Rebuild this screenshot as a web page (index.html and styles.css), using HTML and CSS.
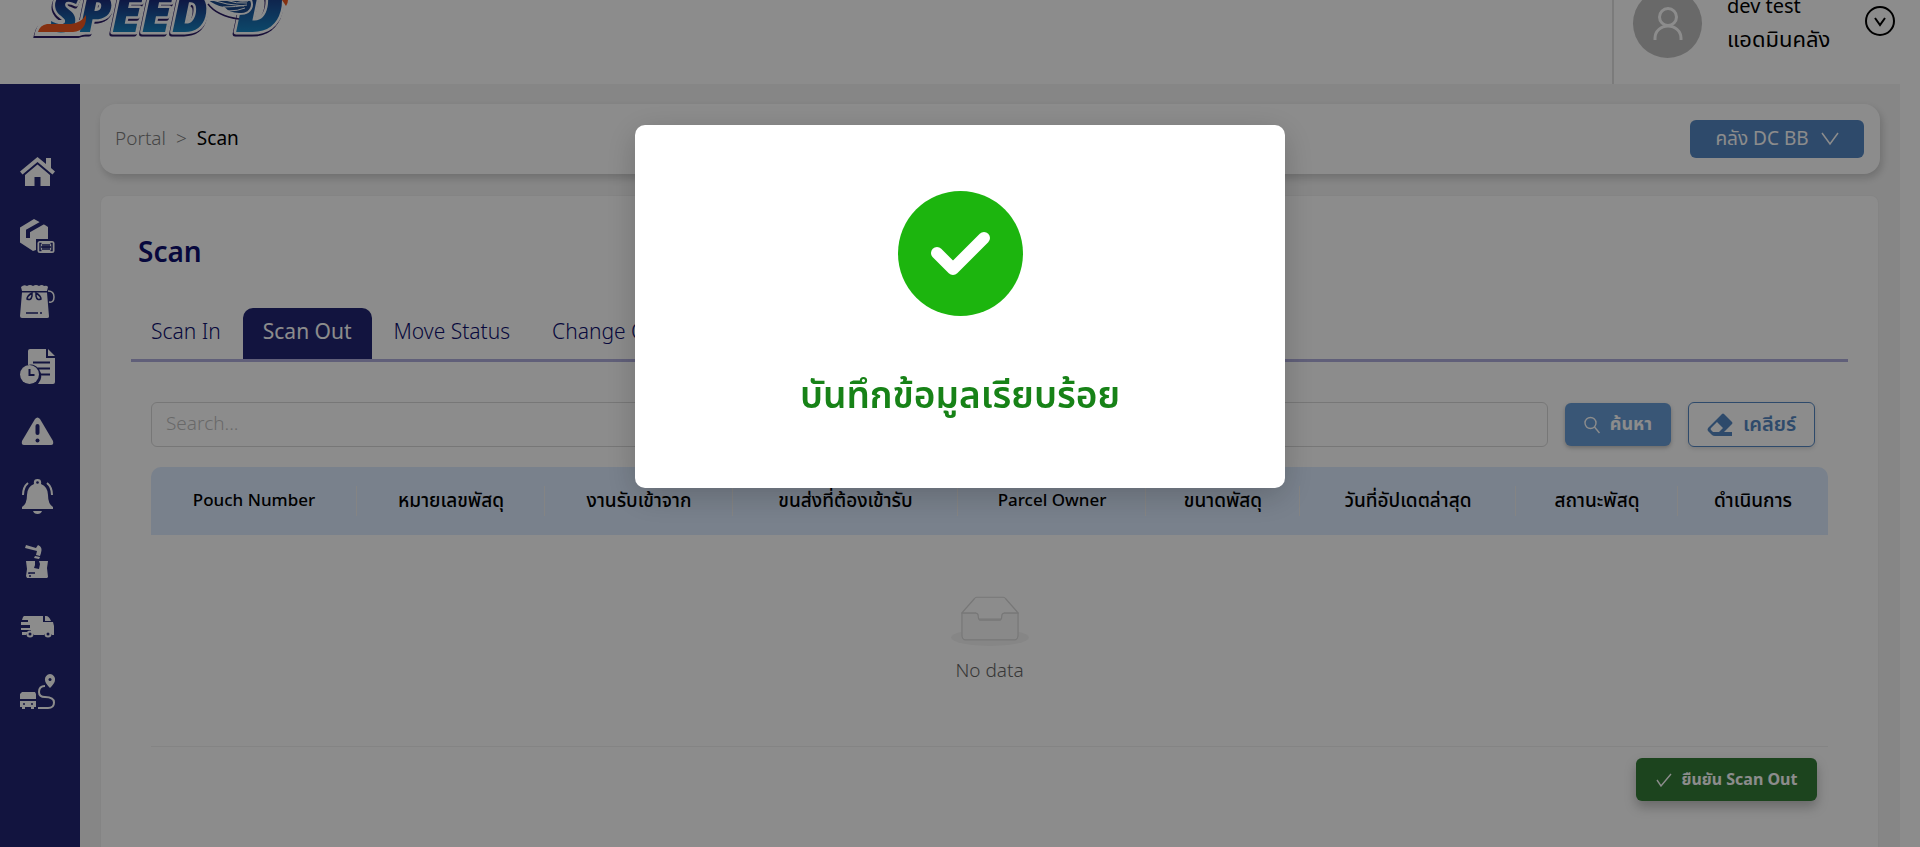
FILE: index.html
```html
<!DOCTYPE html>
<html lang="th">
<head>
<meta charset="utf-8">
<title>Speed-D Scan</title>
<link rel="stylesheet" href="styles.css">
</head>
<body>
<div class="page">
  <header class="header">
    <svg class="logo" width="270" height="54" viewBox="0 0 270 54" role="img" aria-label="Speed-D">
      <defs>
        <linearGradient id="ink" x1="0" y1="0" x2="0" y2="1">
          <stop offset="0.3" stop-color="#1d2476"/><stop offset="0.8" stop-color="#1787c4"/>
        </linearGradient>
      </defs>
      <g class="logo-rim">
        <path d="M14 33q2-9 9-10h38v8l-6 2z" fill="#fff" stroke="#fff" stroke-width="6"/>
        <g class="logo-text" fill="url(#ink)"><text x="26" y="32">SPEED</text><text class="logo-d" x="211" y="32">D</text></g>
      </g>
      <path d="M14 32q2-7 9-8h24q10-1 15-9 1 16-13 17z" fill="#f2581e"/>
      <path d="M258 0h6q0 3-2 6z" fill="#f2581e"/>
      <path d="M183 0q6 6 17 8 5 6 15 6 6 0 9-2 6-5 3-12z" fill="#1b4a8c" stroke="#fff" stroke-width="2"/>
      <path d="M188 0q14 5 32 6M199 7q13 0 24-2M204 11q10 0 17-3M201 0q12 4 22 3M211 0q6 2 13 1" fill="none" stroke="#fff" stroke-width="1"/>
      <path d="M184 4q9 12 31 15" fill="none" stroke="#2b1c66" stroke-width="1.500"/>
    </svg>
    <div class="user">
      <span class="avatar">
        <svg width="32" height="34" viewBox="0 0 32 34" fill="none" stroke="#fff" stroke-width="3"><circle cx="16" cy="10" r="8.500"/><path d="M3 33v-2a13 12 0 0 1 26 0v2"/></svg>
      </span>
      <div class="user-text"><span>dev test</span><span class="role">แอดมินคลัง</span></div>
      <button class="user-toggle" aria-label="เมนูผู้ใช้">
        <svg width="30" height="30" viewBox="0 0 30 30" fill="none" stroke="#000" stroke-width="2"><circle cx="15" cy="15" r="14"/><path d="M10 12l5 7 5-7"/></svg>
      </button>
    </div>
  </header>
  <div class="body">
    <nav class="sidebar">
      <a href="#" aria-label="หน้าแรก"><svg viewBox="0 0 35 35"><path d="M17.500 3L0 17.500l2.500 3L17.500 8l15 12.500 2.500-3-4-3.500V4h-5v6z"/><path d="M17.500 10.500L5 21v11h9.500v-9h6v9H30V21z"/></svg></a>
      <a href="#" aria-label="พัสดุ"><svg viewBox="0 0 35 35"><path d="M14 0L0 8.500v15L13 32l3-1V20h12V8l-3-2z"/><path d="M23 3.500L8 12v7" fill="none" stroke="#212573" stroke-width="4"/><rect x="16.500" y="21" width="19" height="14" rx="3" fill="#212573"/><rect x="17.500" y="22" width="17" height="12" rx="2.500"/><path class="cut" d="M21.500 24.500H20v7h1.500M30.500 24.500H32v7h-1.500M23 25v6M25 25v6M27 25v6M29 25v6M21 28h10"/></svg></a>
      <a href="#" aria-label="ถุง"><svg viewBox="0 0 35 35"><path d="M1 3q3-3 6-1 3-2 6 0 3-2 6 0 3-2 5 0 3-1 4 1l-1 4H2zM2 8.500h25l2 24q0 1.500-2 1.500H2q-2 0-2-2z"/><path d="M28 7q6 0 6 6t-5 5" fill="none" stroke="#fff" stroke-width="1.500"/><path class="cut" d="M12 9q-5 3-5 6 4 2 5-3zM16 9q5 3 5 6-4 2-5-3zM6 29h12M20 29h2"/></svg></a>
      <a href="#" aria-label="รายงาน"><svg viewBox="0 0 35 35"><path d="M8 2q0-2 2-2h16v9h9v24q0 2-2 2H18q6-7 1-15-5-6-11-4zM28 0l7 7h-7z"/><path class="cut wide" d="M13 13.500h17M18 19.500h12M20 25.500h10"/><circle cx="9.500" cy="25.500" r="9.500"/><path class="cut wide" d="M9.500 20v6h5"/></svg></a>
      <a href="#" aria-label="แจ้งเตือนปัญหา"><svg viewBox="0 0 35 35"><path d="M15 5q2.500-3 5 0l13 22q1 4-2 4H4q-3 0-2-4z"/><path d="M17.500 12v7" stroke="#212573" stroke-width="4" stroke-linecap="round"/><circle cx="17.500" cy="26.500" r="2" fill="#212573"/></svg></a>
      <a href="#" aria-label="การแจ้งเตือน"><svg viewBox="0 0 35 35"><path d="M13 32h9q-1 3-4.500 3T13 32zM14 5q-1-5 3.500-5T21 5q7 3 7 11 0 9 5 12v2H2v-2q5-3 5-12 0-8 7-11z"/><circle cx="17.500" cy="3.500" r="1.300" fill="#212573"/><path d="M3 16q0-8 5-12M32 16q0-8-5-12" fill="none" stroke="#fff" stroke-width="2"/></svg></a>
      <a href="#" aria-label="พัสดุเสียหาย"><svg viewBox="0 0 35 35"><path d="M6 1l10 3 2-3q5 2 3 8l-1 3-4-1 1-4L5 4zM15 12l5 1-1 2-5-1zM6 17h9v4l-1 3 5 1 1-5-1-3h9l-1 7 1 9-1 1H7l-1-2 1-7z"/><path class="cut" d="M9 30v-1h6M9 32h2"/></svg></a>
      <a href="#" aria-label="ขนส่ง"><svg viewBox="0 0 35 35"><path d="M4 7h19v6h10l1 4v9h-2a4.500 4.500 0 0 0-8 0H14a4.500 4.500 0 0 0-8 0H2v-3h9v-2H1v-2h9v-3H1v-3h7v-2H2l1-3zM25 7h1q3 0 5 5h-6z"/><circle cx="10" cy="25" r="3.500"/><circle cx="28" cy="25" r="3.500"/><g fill="#212573"><circle cx="10" cy="25" r="1.500"/><circle cx="28" cy="25" r="1.500"/></g></svg></a>
      <a href="#" aria-label="เส้นทาง"><svg viewBox="0 0 35 35"><path d="M30 0a5.300 5.300 0 0 1 5 6q0 3-5 8-5-5-5-8a5.300 5.300 0 0 1 5-6zM2 18h13l1 2v5H0v-5zM0 27h16v6h-2v2h-3v-2H5v2H2v-2H0z"/><g fill="#212573"><circle cx="30" cy="5.500" r="1.500"/><circle cx="4" cy="30" r="1"/><circle cx="12" cy="30" r="1"/></g><path d="M25 12q-6 0-6 6 0 5 6 5 9 0 9 5.500T28 34H18" fill="none" stroke="#fff" stroke-width="2"/></svg></a>
    </nav>
    <main class="main">
      <div class="crumb-card">
        <div class="crumbs"><a href="#">Portal</a><span>&gt;</span><b>Scan</b></div>
        <button class="btn store">คลัง DC BB <svg width="18" height="14" viewBox="0 0 18 14" fill="none" stroke="#fff" stroke-width="1.500"><path d="M1 1l8 11 8-11"/></svg></button>
      </div>
      <section class="card">
        <h1>Scan</h1>
        <div class="tabs" role="tablist">
          <button role="tab">Scan In</button><button role="tab" class="active" aria-selected="true">Scan Out</button><button role="tab">Move Status</button><button role="tab">Change Owner</button>
        </div>
        <div class="panel">
          <div class="search-row">
            <input type="text" placeholder="Search..." aria-label="Search">
            <button class="btn search"><svg width="16" height="18" viewBox="0 0 16 18" fill="none" stroke="#fff" stroke-width="1.400"><circle cx="6.500" cy="7" r="5.500"/><path d="M10.500 11l5 6"/></svg>ค้นหา</button>
            <button class="btn clear"><svg width="26" height="24" viewBox="0 0 26 24"><path d="M15 1q1-1 2 0l8 8q1 1 0 2l-8 8h8v4H8q-2 0-3-1l-4-4q-1-1 0-3zM10 9l-6 6q-1 1 0 2l2 2h6l4-4z" fill="#5588c4" fill-rule="evenodd"/></svg>เคลียร์</button>
          </div>
          <table>
            <colgroup><col class="c1"><col class="c2"><col class="c2"><col class="c3"><col class="c2"><col class="c4"><col class="c5"><col class="c6"><col class="c7"></colgroup>
            <thead><tr><th class="latin">Pouch Number</th><th>หมายเลขพัสดุ</th><th>งานรับเข้าจาก</th><th>ขนส่งที่ต้องเข้ารับ</th><th class="latin">Parcel Owner</th><th>ขนาดพัสดุ</th><th>วันที่อัปเดตล่าสุด</th><th>สถานะพัสดุ</th><th>ดำเนินการ</th></tr></thead>
            <tbody><tr><td colspan="9">
              <svg width="78" height="50" viewBox="0 0 64 41"><g transform="translate(0 1)" fill="none" fill-rule="evenodd"><ellipse fill="#f5f5f5" cx="32" cy="33" rx="32" ry="7"/><g stroke="#d9d9d9"><path d="M55 12.760L44.854 1.258C44.367.474 43.656 0 42.907 0H21.093c-.749 0-1.460.474-1.947 1.257L9 12.761V13h11v5h24v-5h11z"/><path d="M41.613 15.931c0-1.605.994-2.930 2.227-2.931H55v18.137C55 33.260 53.680 35 52.050 35h-40.100C10.320 35 9 33.259 9 31.137V13h11.160c1.233 0 2.227 1.323 2.227 2.928v.022c0 1.605 1.005 2.901 2.237 2.901h14.752c1.232 0 2.237-1.308 2.237-2.913v-.007z" fill="#fafafa"/></g></g></svg>
              <p>No data</p>
            </td></tr></tbody>
          </table>
          <div class="actions"><button class="btn confirm"><svg width="16" height="14" viewBox="0 0 16 14" fill="none" stroke="#fff" stroke-width="1.400"><path d="M1 7l4 6L15 1"/></svg>ยืนยัน Scan Out</button></div>
        </div>
      </section>
    </main>
  </div>
</div>
<div class="mask">
  <div class="modal" role="dialog" aria-modal="true" aria-labelledby="msg">
    <svg width="125" height="125" viewBox="0 0 125 125"><circle cx="62.500" cy="62.500" r="62.500" fill="#1cb50e"/><path d="M39 62l16 16 31-31" fill="none" stroke="#fff" stroke-width="12" stroke-linecap="round" stroke-linejoin="round"/></svg>
    <h2 id="msg">บันทึกข้อมูลเรียบร้อย</h2>
  </div>
</div>
</body>
</html>
```
FILE: styles.css
```css
* { box-sizing: border-box; }
body { margin: 0; background: #fff; color: #000; font-family: "Noto Sans", "Noto Sans Thai", sans-serif; font-size: 18px; }
button, input { font: inherit; }
a { color: inherit; text-decoration: none; }
.page { height: 100vh; overflow: hidden; display: flex; flex-direction: column; }
.header { height: 84px; flex: none; display: flex; justify-content: space-between; align-items: flex-start; padding-left: 24px; overflow: hidden; }
.logo { display: block; }
.logo-text { font: italic 800 53px "Open Sans", sans-serif; stroke: #fff; stroke-width: 5px; stroke-linejoin: round; paint-order: stroke; }
.logo-d { font-size: 72px; }
.logo-rim { filter: drop-shadow(-1px 2px 0 #2b1c66); }
.user { height: 84px; display: flex; align-items: flex-start; border-left: 2px solid #e0e0e0; padding: 0 25px 0 19px; }
.avatar { width: 69px; height: 69px; margin-top: -11px; border-radius: 50%; background: #bfbfbf; display: flex; align-items: center; justify-content: center; }
.user-text { display: flex; flex-direction: column; width: 138px; margin: -11px 0 0 25px; font-size: 20px; line-height: 33px; white-space: nowrap; }
.role { font-size: 22px; }
.user-toggle { padding: 0; margin-top: 6px; border: 0; background: none; height: 30px; }
.body { flex: 1; display: flex; min-height: 0; padding-right: 21px; }
.sidebar { width: 80px; flex: none; background: #212573; padding: 70px 20px; display: flex; flex-direction: column; gap: 30px; }
.sidebar a { width: 35px; height: 35px; }
.sidebar svg { display: block; width: 35px; height: 35px; fill: #fff; }
.sidebar .cut { fill: none; stroke: #212573; stroke-width: 1.5px; }
.sidebar .wide { stroke-width: 2px; }
.main { flex: 1; background: #f5f5f5; padding: 20px 20px 0; display: flex; flex-direction: column; gap: 21px; }
.crumb-card { height: 70px; flex: none; display: flex; align-items: center; justify-content: space-between; padding: 0 16px 0 15px; background: #fff; border-radius: 16px; box-shadow: 2px 4px 8px rgba(0,0,0,.18); }
.crumbs { display: flex; gap: 10px; font-size: 19px; line-height: 24px; padding-bottom: 2px; font-weight: 300; }
.crumbs a, .crumbs span { color: #808080; }
.crumbs b { font-weight: 400; }
.btn { display: flex; align-items: center; justify-content: center; border: 0; border-radius: 6px; color: #fff; cursor: pointer; white-space: nowrap; }
.store { width: 174px; height: 38px; gap: 12px; background: #5588c4; font-size: 19px; }
.card { flex: 1; margin: 0 1px 0 0; padding: 35px 30px 0; background: #fff; border: 1px solid #f0f0f0; border-bottom: 0; border-radius: 8px 8px 0 0; }
h1 { margin: 0 0 37px 7px; font-size: 28px; line-height: 40px; font-weight: 600; color: #0e1070; }
.tabs { display: flex; gap: 2px; border-bottom: 3px solid #b0aedd; }
.tabs button { height: 51px; padding: 0 20px 5px; border: 0; border-radius: 10px 10px 0 0; background: none; color: #0e1070; font-size: 21px; font-weight: 300; }
.tabs .active { background: #212573; color: #fff; font-weight: 400; }
.panel { padding: 40px 20px 0; }
.search-row { display: flex; align-items: center; gap: 17px; padding-right: 13px; margin-bottom: 20px; }
.search-row input { flex: 1; height: 45px; padding: 0 14px 3px; border: 1px solid #d9d9d9; border-radius: 6px; font-size: 19px; font-weight: 300; outline: 0; }
.search-row input::placeholder { color: #bfbfbf; opacity: 1; }
.search { width: 106px; height: 43px; gap: 10px; background: #689dd7; font-weight: 700; box-shadow: 0 2px 4px rgba(0,0,0,.25); }
.clear { width: 127px; height: 45px; gap: 10px; border: 1px solid #5588c4; background: #fff; color: #5588c4; font-size: 20px; font-weight: 600; box-shadow: 0 2px 4px rgba(0,0,0,.12); }
table { width: 100%; table-layout: fixed; border-collapse: separate; border-spacing: 0; }
.c1 { width: 206px; } .c2 { width: 188px; } .c3 { width: 225px; } .c4 { width: 154px; } .c5 { width: 216px; } .c6 { width: 162px; } .c7 { width: 150px; }
th { height: 68px; padding: 0 0 3px; background: linear-gradient(#f0f0f0, #f0f0f0) right center / 1px 30px no-repeat #dcebff; font-size: 19px; line-height: 26px; font-weight: 500; white-space: nowrap; }
.latin { font-size: 17px; }
th:first-child { border-top-left-radius: 10px; }
th:last-child { border-top-right-radius: 10px; background: #dcebff; }
td { height: 212px; padding: 0 0 2px; text-align: center; vertical-align: middle; border-bottom: 1px solid #f0f0f0; color: #666; font-size: 19px; font-weight: 300; }
td svg { display: block; margin: 0 auto; }
td p { margin: 12px 0 0; line-height: 25px; }
.actions { display: flex; justify-content: flex-end; padding: 11px 11px 0 0; }
.confirm { width: 181px; height: 43px; gap: 10px; background: #337d37; font-size: 16px; font-weight: 700; box-shadow: 0 6px 12px rgba(0,0,0,.25); }
.mask { position: fixed; inset: 0; background: rgba(0,0,0,.45); display: flex; justify-content: center; align-items: flex-start; padding-top: 125px; }
.modal { width: 650px; padding: 66px 24px 64px; display: flex; flex-direction: column; align-items: center; gap: 48px; background: #fff; border-radius: 10px; box-shadow: 0 8px 32px rgba(0,0,0,.2); }
.modal svg { display: block; }
h2 { margin: 0; font-size: 37px; line-height: 60px; font-weight: 600; color: #178217; white-space: nowrap; }
```
